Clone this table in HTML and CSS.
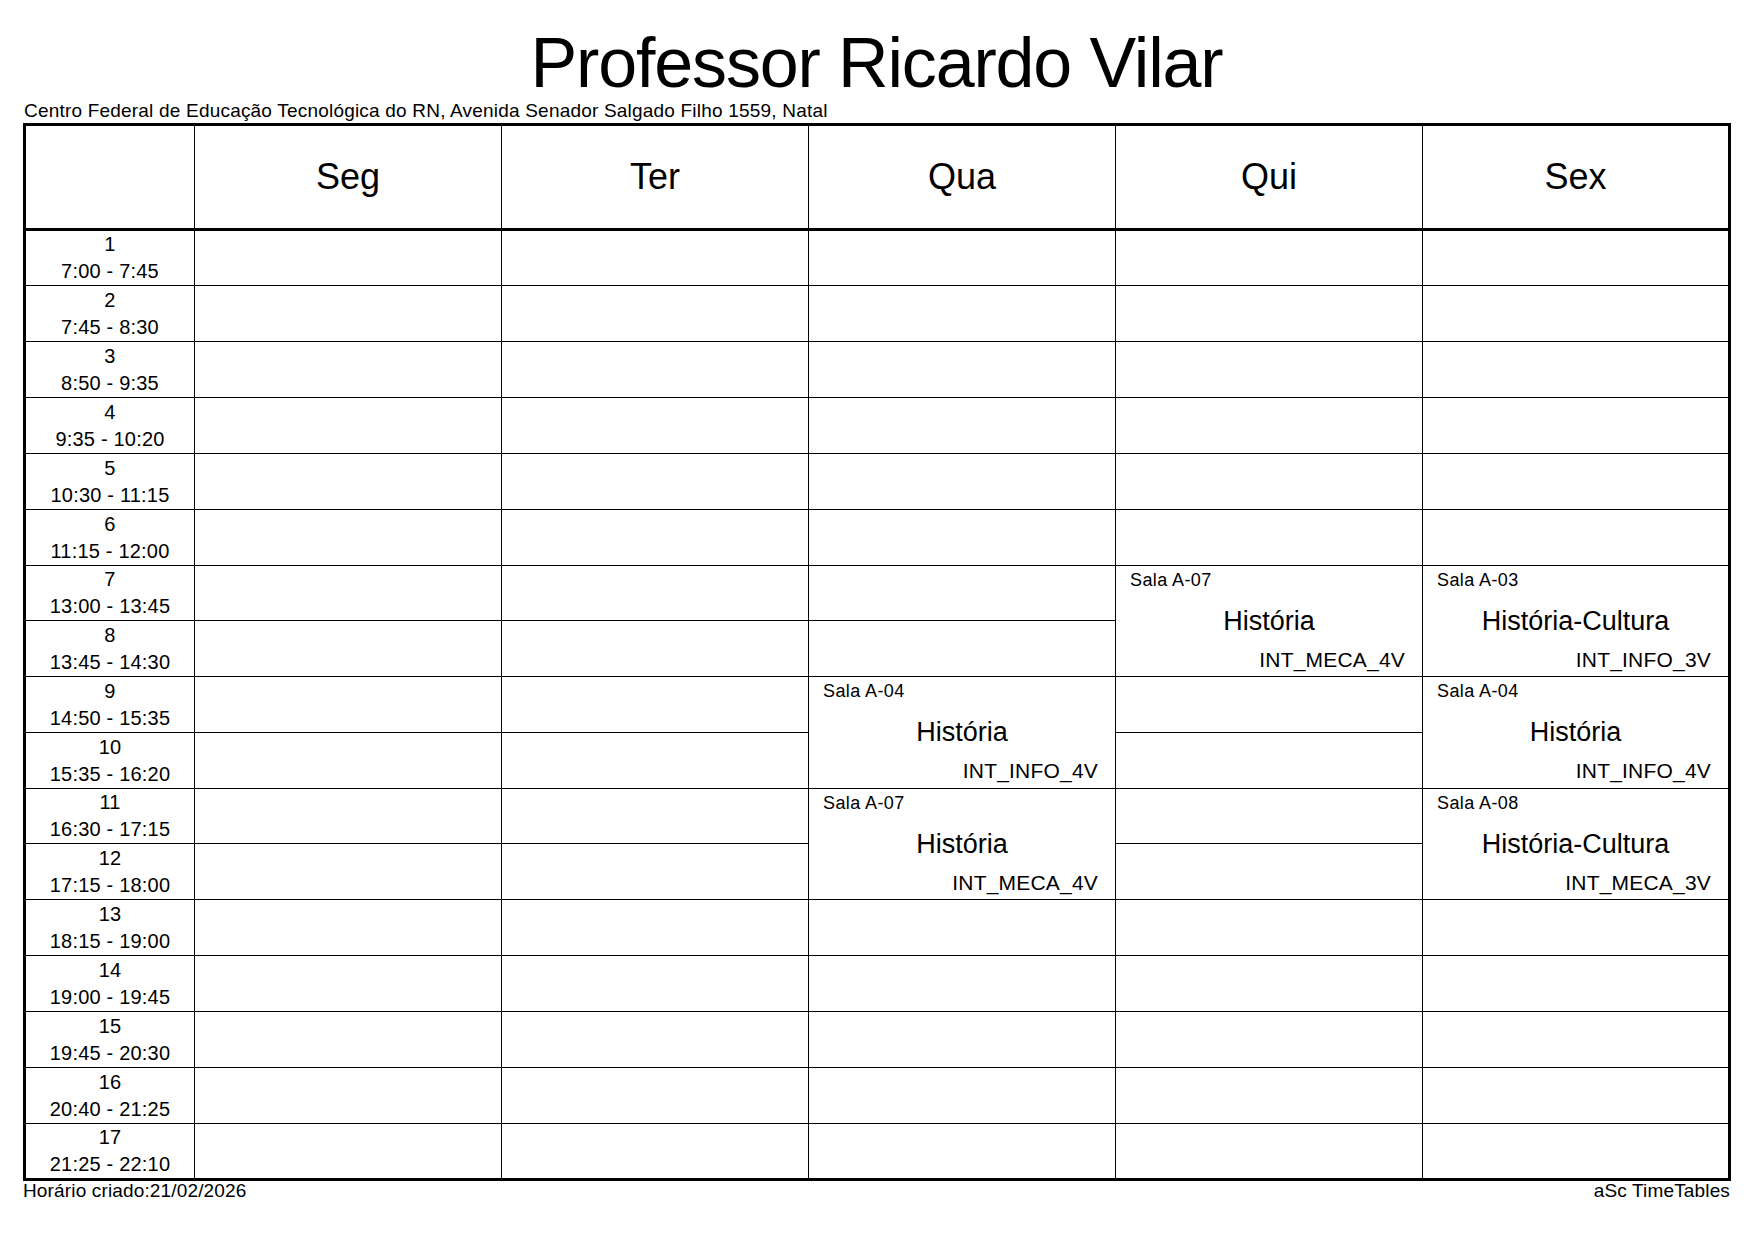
FILE: index.html
```html
<!DOCTYPE html>
<html lang="pt">
<head>
<meta charset="utf-8">
<title>Professor Ricardo Vilar</title>
<link rel="stylesheet" href="styles.css">
</head>
<body>
<div class="sheet">
  <h1 class="title">Professor Ricardo Vilar</h1>
  <div class="subtitle">Centro Federal de Educação Tecnológica do RN, Avenida Senador Salgado Filho 1559, Natal</div>
  <table class="tt">
    <colgroup>
      <col class="c-time">
      <col class="c-day"><col class="c-day"><col class="c-day"><col class="c-day"><col class="c-day">
    </colgroup>
    <thead>
      <tr class="head">
        <th></th><th>Seg</th><th>Ter</th><th>Qua</th><th>Qui</th><th>Sex</th>
      </tr>
    </thead>
    <tbody>
      <tr><td class="per"><div>1</div><div>7:00 - 7:45</div></td><td></td><td></td><td></td><td></td><td></td></tr>
      <tr><td class="per"><div>2</div><div>7:45 - 8:30</div></td><td></td><td></td><td></td><td></td><td></td></tr>
      <tr><td class="per"><div>3</div><div>8:50 - 9:35</div></td><td></td><td></td><td></td><td></td><td></td></tr>
      <tr><td class="per"><div>4</div><div>9:35 - 10:20</div></td><td></td><td></td><td></td><td></td><td></td></tr>
      <tr><td class="per"><div>5</div><div>10:30 - 11:15</div></td><td></td><td></td><td></td><td></td><td></td></tr>
      <tr><td class="per"><div>6</div><div>11:15 - 12:00</div></td><td></td><td></td><td></td><td></td><td></td></tr>
      <tr class="short"><td class="per"><div>7</div><div>13:00 - 13:45</div></td><td></td><td></td><td></td>
        <td class="les" rowspan="2"><div class="room">Sala A-07</div><div class="subj">História</div><div class="cls">INT_MECA_4V</div></td>
        <td class="les" rowspan="2"><div class="room">Sala A-03</div><div class="subj">História-Cultura</div><div class="cls">INT_INFO_3V</div></td>
      </tr>
      <tr><td class="per"><div>8</div><div>13:45 - 14:30</div></td><td></td><td></td><td></td></tr>
      <tr><td class="per"><div>9</div><div>14:50 - 15:35</div></td><td></td><td></td>
        <td class="les" rowspan="2"><div class="room">Sala A-04</div><div class="subj">História</div><div class="cls">INT_INFO_4V</div></td>
        <td></td>
        <td class="les" rowspan="2"><div class="room">Sala A-04</div><div class="subj">História</div><div class="cls">INT_INFO_4V</div></td>
      </tr>
      <tr><td class="per"><div>10</div><div>15:35 - 16:20</div></td><td></td><td></td><td></td></tr>
      <tr class="short"><td class="per"><div>11</div><div>16:30 - 17:15</div></td><td></td><td></td>
        <td class="les" rowspan="2"><div class="room">Sala A-07</div><div class="subj">História</div><div class="cls">INT_MECA_4V</div></td>
        <td></td>
        <td class="les" rowspan="2"><div class="room">Sala A-08</div><div class="subj">História-Cultura</div><div class="cls">INT_MECA_3V</div></td>
      </tr>
      <tr><td class="per"><div>12</div><div>17:15 - 18:00</div></td><td></td><td></td><td></td></tr>
      <tr><td class="per"><div>13</div><div>18:15 - 19:00</div></td><td></td><td></td><td></td><td></td><td></td></tr>
      <tr><td class="per"><div>14</div><div>19:00 - 19:45</div></td><td></td><td></td><td></td><td></td><td></td></tr>
      <tr><td class="per"><div>15</div><div>19:45 - 20:30</div></td><td></td><td></td><td></td><td></td><td></td></tr>
      <tr><td class="per"><div>16</div><div>20:40 - 21:25</div></td><td></td><td></td><td></td><td></td><td></td></tr>
      <tr><td class="per"><div>17</div><div>21:25 - 22:10</div></td><td></td><td></td><td></td><td></td><td></td></tr>
    </tbody>
  </table>
  <div class="footer">
    <span class="created">Horário criado:21/02/2026</span>
    <span class="brand">aSc TimeTables</span>
  </div>
</div>
</body>
</html>
```

FILE: styles.css
```css
html, body {
  margin: 0;
  padding: 0;
  background: #fff;
  color: #000;
  font-family: "Liberation Sans", Arial, sans-serif;
}

.sheet {
  width: 1707px;
  margin-left: 23px;
}

.title {
  margin: 0;
  padding-top: 28px;
  font-size: 70px;
  line-height: 70px;
  font-weight: normal;
  letter-spacing: -1.15px;
  text-align: center;
}

.subtitle {
  margin-top: 3px;
  font-size: 19px;
  line-height: 19px;
  letter-spacing: 0.2px;
  padding-left: 1px;
}

.tt {
  margin-top: 3px;
  border-collapse: collapse;
  table-layout: fixed;
  width: 1707px;
  border: 3px solid #000;
}

.c-time { width: 170px; }
.c-day { width: 307px; }

.tt th,
.tt td {
  border: 1px solid #000;
  padding: 0;
}

.tt thead th {
  border-bottom: 3px solid #000;
  height: 102px;
  font-size: 36px;
  font-weight: normal;
  text-align: center;
  vertical-align: middle;
}

.tt tbody tr {
  height: 56px;
}

.tt tbody tr.short {
  height: 55px;
}

.per {
  text-align: center;
  vertical-align: middle;
  font-size: 20px;
  line-height: 27px;
  letter-spacing: 0.2px;
}

.les {
  vertical-align: top;
}

.room {
  padding: 3px 0 0 14px;
  font-size: 18px;
  line-height: 22px;
  letter-spacing: 0.4px;
}

.subj {
  font-size: 27px;
  line-height: 60px;
  text-align: center;
}

.cls {
  padding-right: 17px;
  font-size: 21px;
  line-height: 18px;
  letter-spacing: 0.2px;
  text-align: right;
}

.footer {
  display: flex;
  justify-content: space-between;
  font-size: 19px;
  line-height: 19px;
  letter-spacing: 0.15px;
}
```
